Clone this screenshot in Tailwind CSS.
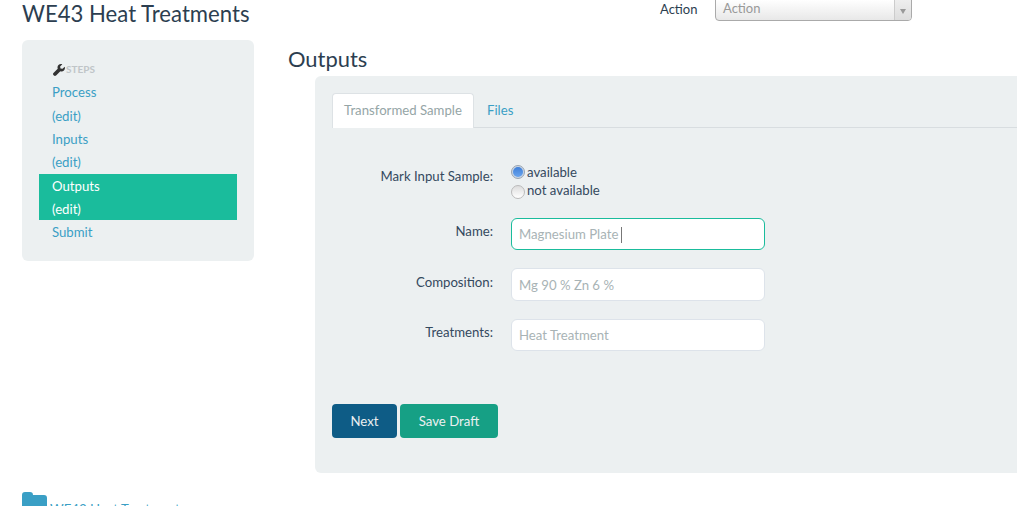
<!DOCTYPE html>
<html lang="en">
<head>
    <meta charset="UTF-8">
    <title>WE43 Heat Treatments</title>
    <script src="https://cdn.jsdelivr.net/npm/@tailwindcss/browser@4"></script>
</head>
<body class="bg-white font-['Lato','Liberation_Sans',sans-serif] text-[#34495e] h-[506px] w-[1017px] overflow-hidden">
    <!-- Header -->
    <header class="flex items-start h-[40px] pl-[22px]">
        <h1 class="w-[638px] text-[22.15px] leading-[28px] font-normal text-[#2c3e50]">WE43 Heat Treatments</h1>
        <span class="w-[55px] text-[13px] leading-[18px] text-[#2c3e50]">Action</span>
        <div class="flex w-[197px] h-[22px] -mt-px border border-[#aaa] rounded-b-[4px] bg-gradient-to-b from-white to-[#e8e8e8] overflow-hidden">
            <span class="flex-1 pl-[7px] text-[13px] leading-[17px] text-[#999]">Action</span>
            <span class="flex items-center justify-center w-[17px] bg-gradient-to-b from-[#eee] to-[#ddd] border-l border-[#ccc]">
                <span class="w-0 h-0 mt-[2px] border-x-[3px] border-x-transparent border-t-[5px] border-t-[#999]"></span>
            </span>
        </div>
    </header>

    <div class="flex items-start pl-[22px]">
        <!-- Sidebar -->
        <aside class="w-[232px] shrink-0">
            <nav class="bg-[#ecf0f1] rounded-[6px] h-[221px] pt-[21px] px-[17px] text-[13.2px] text-[#3a9fc5]">
                <div class="flex items-center h-[16px] pl-[14px] text-[10px] font-bold text-[#c0c5c8]">
                    <svg class="w-[12px] h-[12px] mr-[1px] mt-[2px]" viewBox="0 0 16 16"><path fill="#333" d="M15.6 3.6 12.7 6.4 10 5.9 9.5 3.2 12.4.4C10.7-.3 8.7 0 7.3 1.4 6 2.7 5.7 4.6 6.3 6.2L.6 11.9c-.8.8-.8 2.100 0 2.900l.6.6c.8.8 2.100.8 2.900 0l5.700-5.700c1.600.6 3.500.3 4.800-1 1.400-1.400 1.700-3.400 1-5.100z"/></svg>
                    STEPS
                </div>
                <ul class="mt-[4px]">
                    <li class="pl-[13px] h-[23.500px] leading-[23px]">Process</li>
                    <li class="pl-[13px] h-[23px] leading-[23px]">(edit)</li>
                    <li class="pl-[13px] h-[23.500px] leading-[23px]">Inputs</li>
                    <li class="pl-[13px] h-[23px] leading-[23px]">(edit)</li>
                    <li class="pl-[13px] h-[23px] leading-[25px] bg-[#1abc9c] text-white">Outputs</li>
                    <li class="pl-[13px] h-[23px] leading-[25px] bg-[#1abc9c] text-white">(edit)</li>
                    <li class="pl-[13px] h-[23px] leading-[25px]">Submit</li>
                </ul>
            </nav>
            <div class="flex items-start mt-[231px] text-[13.2px] text-[#3a9fc5]">
                <svg class="w-[26px] h-[22px] shrink-0" viewBox="0 0 26 22"><path fill="#3a9fc5" d="M0 3a3 3 0 0 1 3-3h5a3 3 0 0 1 3 3h11a3 3 0 0 1 3 3v16H0z"/></svg>
                <span class="mt-[8px] ml-[2px] leading-[18px] whitespace-nowrap">WE43 Heat Treatments</span>
            </div>
        </aside>

        <!-- Main -->
        <main class="ml-[34px] flex-1 min-w-0">
            <h2 class="text-[21.9px] leading-[38px] h-[36px] font-normal text-[#2c3e50]">Outputs</h2>
            <section class="ml-[27px] h-[397px] bg-[#ecf0f1] rounded-l-[6px] pl-[17px] pt-[17px]">
                <div class="flex h-[35px] border-b border-[#d8dde0] text-[13.2px]">
                    <span class="w-[142px] h-[35px] bg-white border border-b-0 border-[#dde2e5] rounded-t-[4px] text-center leading-[33px] text-[#95a5a6]">Transformed Sample</span>
                    <span class="ml-[13px] leading-[35px] text-[#3a9fc5]">Files</span>
                </div>

                <form class="mt-[35px] text-[13.2px]">
                    <div class="flex h-[39px]">
                        <label class="w-[161px] pt-[4px] text-right leading-[18px]">Mark Input Sample:</label>
                        <div class="ml-[18px] leading-[18px]">
                            <div class="flex items-center h-[18px]">
                                <span class="flex items-center justify-center w-[14px] h-[14px] rounded-full bg-[#c9d6e6] border border-[#9aa5b1]">
                                    <span class="w-[10px] h-[10px] rounded-full bg-gradient-to-b from-[#3f7fd8] to-[#6aa5ee]"></span>
                                </span>
                                <span class="ml-[2px]">available</span>
                            </div>
                            <div class="flex items-center h-[18px]">
                                <span class="w-[14px] h-[14px] mt-[3px] rounded-full bg-gradient-to-b from-[#ddd] to-white border border-[#bbb]"></span>
                                <span class="ml-[2px]">not available</span>
                            </div>
                        </div>
                    </div>

                    <div class="flex h-[32px] mt-[16px]">
                        <label class="w-[161px] pt-[4px] text-right leading-[18px]">Name:</label>
                        <div class="flex items-center ml-[18px] w-[254px] h-[32px] pl-[7px] pt-[2px] bg-white border border-[#1abc9c] rounded-[6px] text-[#a8b3b5]">
                            Magnesium Plate<span class="w-px h-[16px] ml-[3px] bg-[#777]"></span>
                        </div>
                    </div>

                    <div class="flex h-[33px] mt-[18px]">
                        <label class="w-[161px] pt-[5px] text-right leading-[18px]">Composition:</label>
                        <div class="flex items-center ml-[18px] w-[254px] h-[33px] pl-[7px] pt-[2px] bg-white border border-[#dde3ea] rounded-[6px] text-[#a8b3b5]">Mg 90 % Zn 6 %</div>
                    </div>

                    <div class="flex h-[32px] mt-[18px]">
                        <label class="w-[161px] pt-[4px] text-right leading-[18px]">Treatments:</label>
                        <div class="flex items-center ml-[18px] w-[254px] h-[32px] pl-[7px] pt-[2px] bg-white border border-[#dde3ea] rounded-[6px] text-[#a8b3b5]">Heat Treatment</div>
                    </div>

                    <div class="flex gap-[3px] mt-[53px]">
                        <button type="button" class="w-[65px] h-[34px] pt-[2px] bg-[#0e5c86] text-[#ecf0f1] rounded-[4px]">Next</button>
                        <button type="button" class="w-[98px] h-[34px] pt-[2px] bg-[#16a085] text-[#ecf0f1] rounded-[4px]">Save Draft</button>
                    </div>
                </form>
            </section>
        </main>
    </div>
</body>
</html>
